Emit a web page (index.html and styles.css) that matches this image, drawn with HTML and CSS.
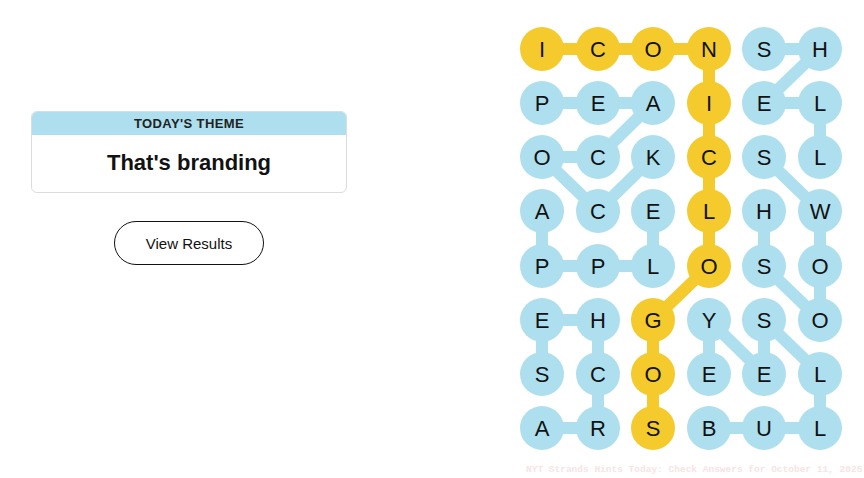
FILE: index.html
```html
<!DOCTYPE html>
<html lang="en">
<head>
    <meta charset="UTF-8">
    <meta name="viewport" content="width=device-width, initial-scale=1.0">
    <title>Strands</title>
    <link rel="stylesheet" href="styles.css">
</head>
<body>
    <div class="page">
        <div class="intro">
            <div class="theme-card">
                <div class="theme-label">TODAY'S THEME</div>
                <div class="theme-title">That's branding</div>
            </div>
            <button class="btn-results">View Results</button>
        </div>

        <svg class="board" width="322" height="423" viewBox="0 0 322 423">
            <!-- found words -->
            <g class="paths">
                <polyline class="gold" points="22,22 189,22 189,239 133,293 133,401"/>
                <polyline points="244,22 300,22 244,76 300,76 300,130"/>
                <polyline points="22,76 78,76 133,76 78,130 22,130 78,184 133,130"/>
                <polyline points="22,184 22,239 78,239 133,239 133,184"/>
                <polyline points="244,130 300,184 300,239 300,293 244,239 244,184"/>
                <polyline points="22,401 78,401 78,347 78,293 22,293 22,347"/>
                <polyline points="189,401 244,401 300,401 300,347 244,293 244,347 189,293 189,347"/>
            </g>

            <!-- row 1 -->
            <g class="cell gold" transform="translate(22,22)"><circle r="22"/><text y="8">I</text></g>
            <g class="cell gold" transform="translate(78,22)"><circle r="22"/><text y="8">C</text></g>
            <g class="cell gold" transform="translate(133,22)"><circle r="22"/><text y="8">O</text></g>
            <g class="cell gold" transform="translate(189,22)"><circle r="22"/><text y="8">N</text></g>
            <g class="cell" transform="translate(244,22)"><circle r="22"/><text y="8">S</text></g>
            <g class="cell" transform="translate(300,22)"><circle r="22"/><text y="8">H</text></g>
            <!-- row 2 -->
            <g class="cell" transform="translate(22,76)"><circle r="22"/><text y="8">P</text></g>
            <g class="cell" transform="translate(78,76)"><circle r="22"/><text y="8">E</text></g>
            <g class="cell" transform="translate(133,76)"><circle r="22"/><text y="8">A</text></g>
            <g class="cell gold" transform="translate(189,76)"><circle r="22"/><text y="8">I</text></g>
            <g class="cell" transform="translate(244,76)"><circle r="22"/><text y="8">E</text></g>
            <g class="cell" transform="translate(300,76)"><circle r="22"/><text y="8">L</text></g>
            <!-- row 3 -->
            <g class="cell" transform="translate(22,130)"><circle r="22"/><text y="8">O</text></g>
            <g class="cell" transform="translate(78,130)"><circle r="22"/><text y="8">C</text></g>
            <g class="cell" transform="translate(133,130)"><circle r="22"/><text y="8">K</text></g>
            <g class="cell gold" transform="translate(189,130)"><circle r="22"/><text y="8">C</text></g>
            <g class="cell" transform="translate(244,130)"><circle r="22"/><text y="8">S</text></g>
            <g class="cell" transform="translate(300,130)"><circle r="22"/><text y="8">L</text></g>
            <!-- row 4 -->
            <g class="cell" transform="translate(22,184)"><circle r="22"/><text y="8">A</text></g>
            <g class="cell" transform="translate(78,184)"><circle r="22"/><text y="8">C</text></g>
            <g class="cell" transform="translate(133,184)"><circle r="22"/><text y="8">E</text></g>
            <g class="cell gold" transform="translate(189,184)"><circle r="22"/><text y="8">L</text></g>
            <g class="cell" transform="translate(244,184)"><circle r="22"/><text y="8">H</text></g>
            <g class="cell" transform="translate(300,184)"><circle r="22"/><text y="8">W</text></g>
            <!-- row 5 -->
            <g class="cell" transform="translate(22,239)"><circle r="22"/><text y="8">P</text></g>
            <g class="cell" transform="translate(78,239)"><circle r="22"/><text y="8">P</text></g>
            <g class="cell" transform="translate(133,239)"><circle r="22"/><text y="8">L</text></g>
            <g class="cell gold" transform="translate(189,239)"><circle r="22"/><text y="8">O</text></g>
            <g class="cell" transform="translate(244,239)"><circle r="22"/><text y="8">S</text></g>
            <g class="cell" transform="translate(300,239)"><circle r="22"/><text y="8">O</text></g>
            <!-- row 6 -->
            <g class="cell" transform="translate(22,293)"><circle r="22"/><text y="8">E</text></g>
            <g class="cell" transform="translate(78,293)"><circle r="22"/><text y="8">H</text></g>
            <g class="cell gold" transform="translate(133,293)"><circle r="22"/><text y="8">G</text></g>
            <g class="cell" transform="translate(189,293)"><circle r="22"/><text y="8">Y</text></g>
            <g class="cell" transform="translate(244,293)"><circle r="22"/><text y="8">S</text></g>
            <g class="cell" transform="translate(300,293)"><circle r="22"/><text y="8">O</text></g>
            <!-- row 7 -->
            <g class="cell" transform="translate(22,347)"><circle r="22"/><text y="8">S</text></g>
            <g class="cell" transform="translate(78,347)"><circle r="22"/><text y="8">C</text></g>
            <g class="cell gold" transform="translate(133,347)"><circle r="22"/><text y="8">O</text></g>
            <g class="cell" transform="translate(189,347)"><circle r="22"/><text y="8">E</text></g>
            <g class="cell" transform="translate(244,347)"><circle r="22"/><text y="8">E</text></g>
            <g class="cell" transform="translate(300,347)"><circle r="22"/><text y="8">L</text></g>
            <!-- row 8 -->
            <g class="cell" transform="translate(22,401)"><circle r="22"/><text y="8">A</text></g>
            <g class="cell" transform="translate(78,401)"><circle r="22"/><text y="8">R</text></g>
            <g class="cell gold" transform="translate(133,401)"><circle r="22"/><text y="8">S</text></g>
            <g class="cell" transform="translate(189,401)"><circle r="22"/><text y="8">B</text></g>
            <g class="cell" transform="translate(244,401)"><circle r="22"/><text y="8">U</text></g>
            <g class="cell" transform="translate(300,401)"><circle r="22"/><text y="8">L</text></g>
        </svg>

        <div class="watermark">NYT Strands Hints Today: Check Answers for October 11, 2025</div>
    </div>
</body>
</html>
```

FILE: styles.css
```css
body {
    margin: 0;
    font-family: "Liberation Sans", Arial, sans-serif;
    color: #121212;
    background: #fff;
}
.page {
    position: relative;
    display: flex;
    height: 478px;
    overflow: hidden;
}
.intro {
    width: 378px;
    padding: 111px 32px 0;
    box-sizing: border-box;
    display: flex;
    flex-direction: column;
    align-items: center;
    gap: 28px;
}
.theme-card {
    width: 100%;
    border: 1px solid #dcdcdc;
    border-radius: 6px;
    overflow: hidden;
    text-align: center;
}
.theme-label {
    background-color: #aedfee;
    height: 23px;
    line-height: 23px;
    font-size: 13px;
    font-weight: 700;
    letter-spacing: 0.4px;
    color: #222;
}
.theme-title {
    height: 57px;
    line-height: 55px;
    font-size: 22px;
    font-weight: 700;
}
.btn-results {
    width: 150px;
    height: 44px;
    border: 1px solid #121212;
    border-radius: 22px;
    background: #fff;
    color: #121212;
    font-family: inherit;
    font-size: 15px;
    cursor: pointer;
}
.board {
    margin: 27px 0 0 142px;
    flex: none;
}
.paths polyline {
    fill: none;
    stroke: #aedfee;
    stroke-width: 12;
    stroke-linejoin: round;
}
.paths polyline.gold {
    stroke: #f5ca2c;
}
.cell circle {
    fill: #aedfee;
}
.cell.gold circle {
    fill: #f5ca2c;
}
.cell text {
    font-family: "Liberation Sans", Arial, sans-serif;
    font-size: 22px;
    fill: #121212;
    text-anchor: middle;
}
.watermark {
    position: absolute;
    left: 526px;
    top: 464px;
    font-family: "Liberation Mono", monospace;
    font-size: 9.5px;
    font-weight: 700;
    color: #f7e4e4;
    white-space: nowrap;
}
```
